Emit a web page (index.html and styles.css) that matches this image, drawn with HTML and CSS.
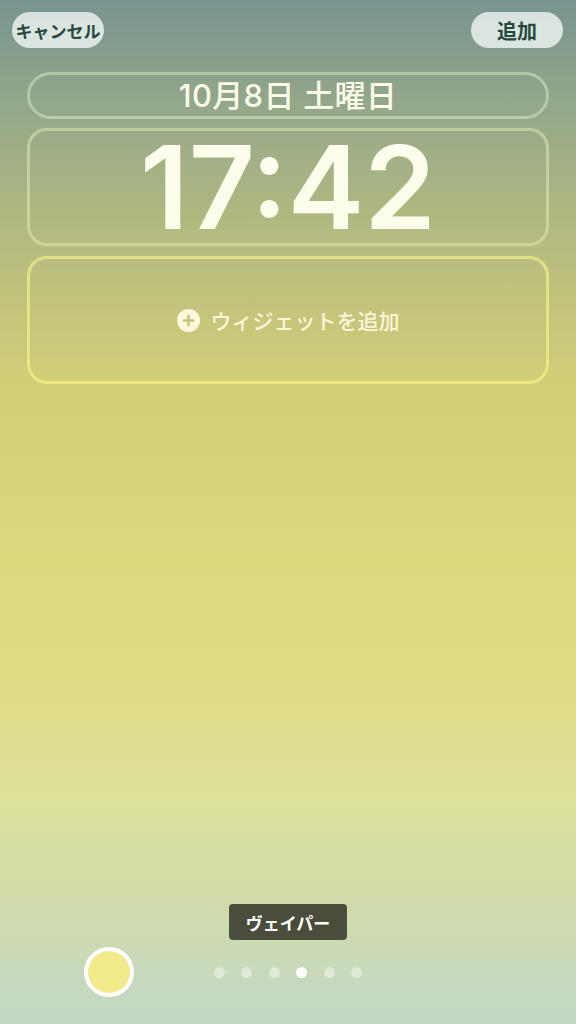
FILE: index.html
```html
<!DOCTYPE html>
<html lang="ja">
<head>
    <meta charset="utf-8">
    <title>ロック画面</title>
    <link rel="stylesheet" href="styles.css">
</head>
<body>
    <div class="screen">
        <!-- top bar -->
        <div class="topbar">
            <button class="pill pill-cancel">キャンセル</button>
            <button class="pill pill-add">追加</button>
        </div>

        <div class="slot slot-date">10月8日 土曜日</div>
        <div class="slot slot-time">17:42</div>
        <div class="slot slot-widget">
            <svg class="plus" width="23" height="23" viewBox="0 0 22 22">
                <circle cx="11" cy="11" r="11" fill="#fbf8dc"/>
                <path d="M11 6.5v9M6.5 11h9" stroke="#c4c27c" stroke-width="2.4" stroke-linecap="round"/>
            </svg>
            <span>ウィジェットを追加</span>
        </div>

        <div class="spacer"></div>

        <!-- bottom -->
        <div class="tip-wrap">
            <div class="tip">ヴェイパー</div>
        </div>
        <div class="bottom-row">
            <div class="swatch-cell">
                <div class="swatch"></div>
            </div>
            <div class="dots">
                <span class="dot"></span>
                <span class="dot"></span>
                <span class="dot"></span>
                <span class="dot active"></span>
                <span class="dot"></span>
                <span class="dot"></span>
            </div>
            <div></div>
        </div>
    </div>
</body>
</html>
```
FILE: styles.css
```css
html, body {
    margin: 0;
    padding: 0;
}
body {
    font-family: Inter, "Noto Sans CJK JP", sans-serif;
}
.screen {
    width: 576px;
    height: 1024px;
    display: flex;
    flex-direction: column;
    background: linear-gradient(to bottom,
        #789490 0px,
        #9aac88 130px,
        #b8bc7e 250px,
        #d3cf78 390px,
        #dcd87c 560px,
        #dfdc88 700px,
        #dee29c 800px,
        #d1dbaa 900px,
        #c2d8c6 1024px);
    box-sizing: border-box;
}
.topbar {
    display: flex;
    justify-content: space-between;
    padding: 12px 13px 0 12px;
}
.pill {
    height: 36px;
    width: 92px;
    border: none;
    border-radius: 18px;
    background: rgba(238, 245, 242, 0.82);
    color: #264a3e;
    font-family: "Noto Sans CJK JP", sans-serif;
    font-weight: bold;
    padding: 0;
}
.pill-cancel {
    font-size: 17px;
}
.pill-add {
    font-size: 20px;
}
.slot {
    margin: 0 27px;
    border: 3px solid rgba(235, 245, 200, 0.45);
    box-sizing: border-box;
    color: #fbfbe8;
    display: flex;
    align-items: center;
    justify-content: center;
}
.slot-date {
    margin-top: 24px;
    height: 47px;
    padding-bottom: 4px;
    border-radius: 24px;
    font-size: 31px;
    font-weight: 500;
    letter-spacing: 0.3px;
    border-color: rgba(220, 238, 200, 0.5);
}
.slot-time {
    margin-top: 9px;
    height: 118px;
    border-radius: 20px;
    font-size: 115px;
    font-weight: 600;
    line-height: 1;
    color: #fdfdec;
    border-color: rgba(240, 245, 190, 0.45);
}
.slot-widget {
    margin-top: 10px;
    height: 128px;
    border-radius: 20px;
    border-color: rgba(250, 248, 140, 0.6);
    font-family: "Noto Sans CJK JP", sans-serif;
    font-size: 21px;
    font-weight: 500;
    color: #faf6d6;
    gap: 11px;
}
.plus {
    display: block;
}
.spacer {
    flex: 1;
}
.tip-wrap {
    display: flex;
    justify-content: center;
}
.tip {
    background: #4a4d3b;
    color: #ffffff;
    border-radius: 4px;
    width: 118px;
    height: 36px;
    display: flex;
    align-items: center;
    justify-content: center;
    font-family: "Noto Sans CJK JP", sans-serif;
    font-weight: bold;
    font-size: 17px;
}
.bottom-row {
    display: grid;
    grid-template-columns: 1fr auto 1fr;
    align-items: center;
    margin-top: 7px;
    margin-bottom: 27px;
}
.swatch-cell {
    padding-left: 84px;
}
.swatch {
    width: 50px;
    height: 50px;
    box-sizing: border-box;
    border-radius: 50%;
    border: 4px solid #ffffff;
    background: #f1e98a;
}
.dots {
    display: flex;
    gap: 16.6px;
}
.dot {
    width: 11px;
    height: 11px;
    border-radius: 50%;
    background: rgba(255, 255, 255, 0.42);
}
.dot.active {
    background: #ffffff;
}
```
